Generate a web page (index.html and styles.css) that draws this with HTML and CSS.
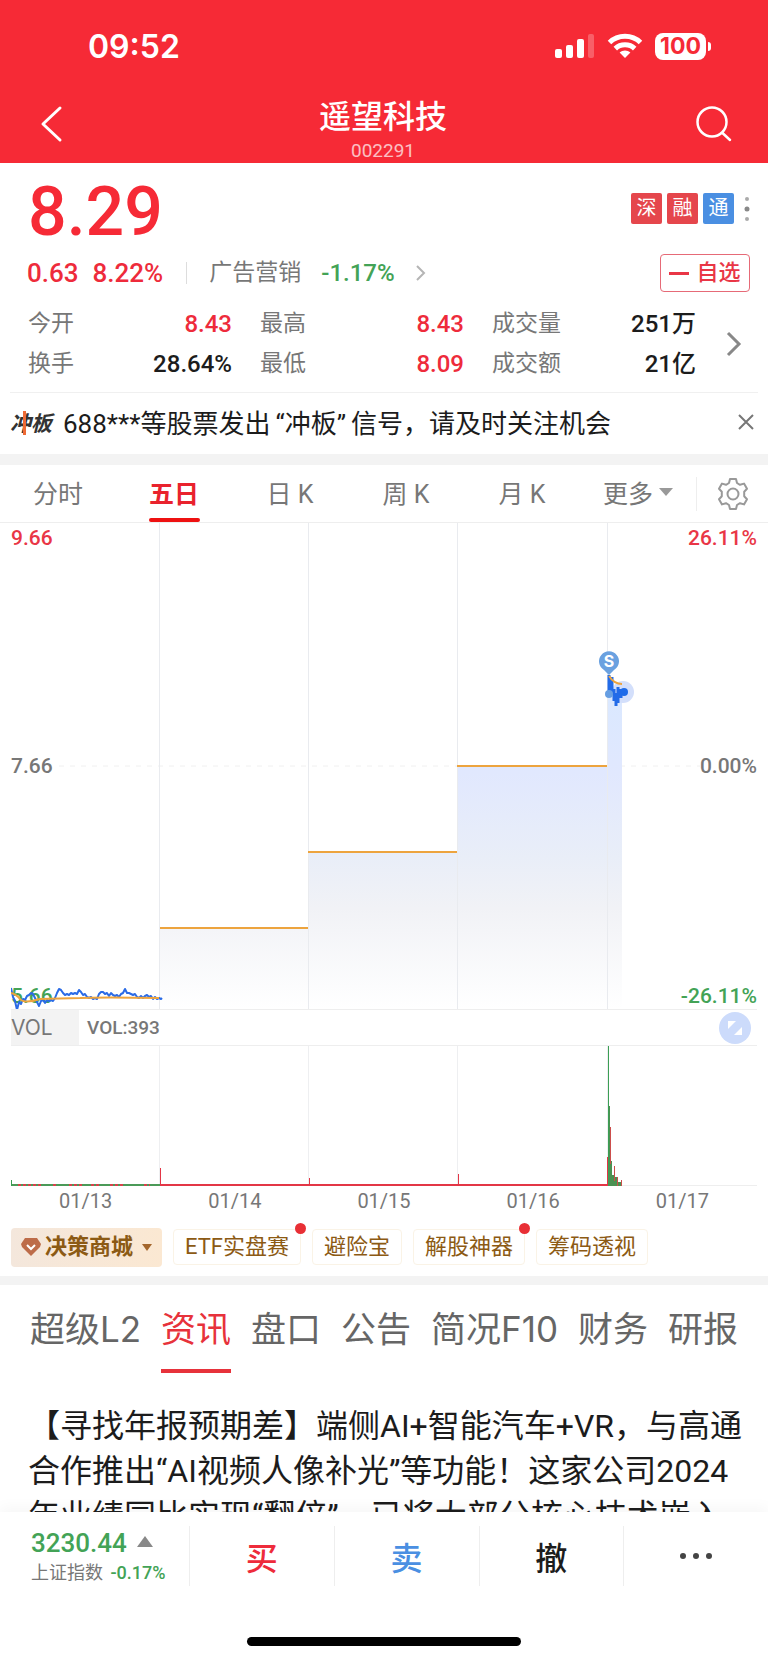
FILE: index.html
```html
<!DOCTYPE html>
<html lang="zh-CN">
<head>
    <meta charset="UTF-8">
    <meta name="viewport" content="width=device-width, initial-scale=1">
    <title>遥望科技 002291</title>
    <link rel="stylesheet" href="styles.css">
</head>
<body>

<header class="header">
    <div class="status">
        <span class="time">09:52</span>
        <div class="status-icons">
            <svg width="40" height="26" viewBox="0 0 40 26" fill="#fff">
                <rect x="0" y="16" width="7" height="9" rx="2"/>
                <rect x="11" y="12" width="7" height="13" rx="2"/>
                <rect x="22" y="6" width="7" height="19" rx="2"/>
                <rect x="33" y="1" width="6" height="24" rx="2" opacity=".25"/>
            </svg>
            <svg width="36" height="26" viewBox="0 0 36 26" fill="none" stroke="#fff" stroke-width="5">
                <path d="M2.500 9.500C11 1.200 25 1.200 33.500 9.500"/>
                <path d="M8.300 15.600C13.500 10.600 22.500 10.600 27.700 15.600"/>
                <path d="M18 25l-5.400-5.400c3-2.800 7.800-2.800 10.800 0z" fill="#fff" stroke="none"/>
            </svg>
            <div class="battery"><span>100</span></div>
        </div>
    </div>
    <div class="title-bar">
        <button class="icon-button" aria-label="返回">
            <svg width="36" height="40" viewBox="0 0 36 40" fill="none" stroke="#fff" stroke-width="3" stroke-linecap="round" stroke-linejoin="round"><path d="M25 4L8 20l17 16"/></svg>
        </button>
        <div class="title">
            <h1>遥望科技</h1>
            <p>002291</p>
        </div>
        <button class="icon-button" aria-label="搜索">
            <svg width="38" height="38" viewBox="0 0 38 38" fill="none" stroke="#fff" stroke-width="2.500" stroke-linecap="round"><circle cx="17" cy="17" r="14.500"/><path d="M27.500 28L35 35"/></svg>
        </button>
    </div>
</header>

<main class="content">
    <section class="quote">
        <div class="price-row">
            <strong class="price">8.29</strong>
            <div class="tags">
                <span class="tag">深</span>
                <span class="tag">融</span>
                <span class="tag tag-blue">通</span>
                <svg width="8" height="30" viewBox="0 0 8 30" fill="#aaa"><circle cx="4" cy="5" r="2"/><circle cx="4" cy="15" r="2.500" fill="#888"/><circle cx="4" cy="25" r="2"/></svg>
            </div>
        </div>
        <div class="change-row">
            <span class="change red">0.63</span>
            <span class="change red">8.22%</span>
            <a class="sector" href="#">
                <span>广告营销</span>
                <b class="green">-1.17%</b>
                <svg width="12" height="18" viewBox="0 0 12 18" fill="none" stroke="#b5b5b5" stroke-width="2"><path d="M2 2l7 7-7 7"/></svg>
            </a>
            <button class="watch"><i></i>自选</button>
        </div>
        <div class="stats-row">
            <dl class="stats">
                <div><dt>今开</dt><dd class="red">8.43</dd></div>
                <div><dt>最高</dt><dd class="red">8.43</dd></div>
                <div><dt>成交量</dt><dd>251万</dd></div>
                <div><dt>换手</dt><dd>28.64%</dd></div>
                <div><dt>最低</dt><dd class="red">8.09</dd></div>
                <div><dt>成交额</dt><dd>21亿</dd></div>
            </dl>
            <button class="more-stats" aria-label="更多行情">
                <svg width="16" height="26" viewBox="0 0 16 26" fill="none" stroke="#888" stroke-width="3"><path d="M2 2l11 11L2 24"/></svg>
            </button>
        </div>
    </section>

    <section class="notice">
        <b class="notice-logo">冲<i></i>板</b>
        <p>688***等股票发出<span class="quoted">“冲板”</span>信号，请及时关注机会</p>
        <button aria-label="关闭">
            <svg width="18" height="18" viewBox="0 0 18 18" stroke="#777" stroke-width="2"><path d="M2 2l14 14M16 2L2 16"/></svg>
        </button>
    </section>

    <nav class="periods">
        <button>分时</button>
        <button class="active">五日</button>
        <button>日 K</button>
        <button>周 K</button>
        <button>月 K</button>
        <button>更多<i class="caret"></i></button>
        <button class="settings" aria-label="设置">
            <svg width="34" height="34" viewBox="0 0 34 34" fill="none" stroke="#999" stroke-width="2" stroke-linejoin="round">
                <path d="M14 2h6l1 4 3 1.800 4-1.200 3 5.200-2.800 3v4.400l2.800 3-3 5.200-4-1.200-3 1.800-1 4h-6l-1-4-3-1.800-4 1.200-3-5.200 2.800-3v-4.400l-2.800-3 3-5.200 4 1.200 3-1.800z"/>
                <circle cx="17" cy="17" r="5.500"/>
            </svg>
        </button>
    </nav>

    <section class="chart">
        <div class="price-chart">
            <span class="label top-left red">9.66</span>
            <span class="label top-right red">26.11%</span>
            <span class="label mid-left">7.66</span>
            <span class="label mid-right">0.00%</span>
            <span class="label bottom-left green">5.66</span>
            <span class="label bottom-right green">-26.11%</span>
            <svg viewBox="0 0 746 486">
                <defs>
                    <linearGradient id="fade" gradientUnits="userSpaceOnUse" x1="0" y1="150" x2="0" y2="486">
                        <stop offset="0" stop-color="#d8e8ff"/>
                        <stop offset=".3" stop-color="#e1e8fe"/>
                        <stop offset=".55" stop-color="#e9eef8"/>
                        <stop offset=".7" stop-color="#f1f2f6"/>
                        <stop offset="1" stop-color="#ffffff"/>
                    </linearGradient>
                </defs>
                <path d="M48 243H690" stroke="#f0f0f0" stroke-width="1" stroke-dasharray="5 6"/>
                <!-- area under the price -->
                <path d="M148 405H297V329H446V243H596V150L605 172 611 165V486H148z" fill="url(#fade)"/>
                <path d="M148.500 0V486M297.500 0V486M446.500 0V486M596.500 0V486" stroke="#e9ebef"/>
                <!-- price -->
                <path d="M0 465l2 9 2 4 2 9 2-8 2 2 2-5 2 1 2-4 2-1 2-2 2 1 2 4 2 4 2 4 2-5 2-1 2 3 2-3 2 1 2-1 2 1 2-3 2-5 2-4 2 1 2 3 2 2 2-1 2 1 2-2 2 1 2-1 2 1 2-4 2 2 2 3 2-1 2 3 2 1 2-1 2 2 2-1 2 1 2-5 2-2 2 0 2 2 2-1 2 3 2-3 2 2 2 1 2-1 2 2 2-3 2-1 2-4 2 4 2 0 2 1 2 1 2-1 2 3 2 1 2-2 2 2 2-2 2-1 2 2 2-1 2 3 2-2 2 2 2-1 2 1 1-1" fill="none" stroke="#2b6be6" stroke-width="2" stroke-linejoin="round"/>
                <path d="M0 470q5 1 9 6t20 0l40-1q20-1 79 0M149 405H297M297 329H446M446 243H596" fill="none" stroke="#eda43e" stroke-width="2"/>
                <!-- today -->
                <circle cx="612" cy="169" r="11" fill="#d3dffb"/>
                <path d="M598 152v18M601 154v18M603 166v12M605 170v13M607 164v16M610 166v9" fill="none" stroke="#226be8" stroke-width="3"/>
                <path d="M598 153q5 8 13 8" fill="none" stroke="#eda43e" stroke-width="2"/>
                <circle cx="598" cy="171" r="4" fill="#669ee2"/>
                <circle cx="613" cy="169" r="4" fill="#1e6be9"/>
                <path d="M598 152l-5-5a10 10 0 1 1 10 0z" fill="#6aa1e0"/>
                <text x="598" y="144" text-anchor="middle" class="marker">S</text>
            </svg>
        </div>
        <div class="volume-bar">
            <button class="indicator">VOL</button>
            <span>VOL:393</span>
            <button class="expand" aria-label="全屏">
                <svg width="32" height="32" viewBox="0 0 32 32"><circle cx="16" cy="16" r="16" fill="#ccdbfb"/><path d="M9 9h8l-8 8zM23 23h-8l8-8z" fill="#fff"/></svg>
            </button>
        </div>
        <svg class="volume-chart" viewBox="0 0 746 140">
            <path d="M148.500 0V140M297.500 0V140M446.500 0V140M596.500 0V140" stroke="#eeeff1"/>
            <path d="M0 139.500H746" stroke="#eee"/>
            <path d="M0 139H149" stroke="#4b9a58" stroke-width="2"/>
            <path d="M7 139H30M42 139h5M58 139h14M80 139h10M99 139h14M133 139h6" stroke="#d8424c" stroke-width="2" stroke-dasharray="3 2"/>
            <path d="M149 139H596" stroke="#e33646" stroke-width="2"/>
            <path d="M149.500 122V140M298.500 132V140M447.500 128V140M596.500 111V140" stroke="#e33646"/>
            <path d="M.5 134V140" stroke="#3b9e54"/>
            <path d="M597.500 0V140" stroke="#3b9e54" stroke-width="1"/>
            <path d="M598 60h1v55h2v14h2v2h4v5h4v4h-13z" fill="#4b9152"/>
            <path d="M599.500 81V118M603.500 120V135M606.500 131V140M610.500 134V140" stroke="#cc4e4c"/>
        </svg>
        <div class="dates">
            <span>01/13</span>
            <span>01/14</span>
            <span>01/15</span>
            <span>01/16</span>
            <span>01/17</span>
        </div>
    </section>

    <section class="tools">
        <button class="tool shop">
            <svg width="20" height="18" viewBox="0 0 20 18"><path d="M4 0h12l4 6-1 3-9 9-9-9-1-3z" fill="#bd6c49"/><path d="M6 7l4 4 4-4" fill="none" stroke="#fff" stroke-width="2"/></svg>
            决策商城
            <i class="caret"></i>
        </button>
        <button class="tool has-dot">ETF实盘赛</button>
        <button class="tool">避险宝</button>
        <button class="tool has-dot">解股神器</button>
        <button class="tool">筹码透视</button>
    </section>

    <nav class="tabs">
        <a href="#">超级L2</a>
        <a href="#" class="active">资讯</a>
        <a href="#">盘口</a>
        <a href="#">公告</a>
        <a href="#">简况F10</a>
        <a href="#">财务</a>
        <a href="#">研报</a>
    </nav>

    <article class="news">
        <p>【寻找年报预期差】端侧AI+智能汽车+VR，与高通合作推出“AI视频人像补光”等功能！这家公司2024年业绩同比实现“翻倍”，已将大部分核心技术嵌入</p>
    </article>
</main>

<footer class="footer">
    <div class="actions">
        <a class="index" href="#">
            <span class="index-value green">3230.44 <i></i></span>
            <span class="index-name">上证指数 <b class="green">-0.17%</b></span>
        </a>
        <button class="red">买</button>
        <button class="blue">卖</button>
        <button>撤</button>
        <button aria-label="更多">
            <svg width="34" height="8" viewBox="0 0 34 8" fill="#444"><circle cx="4" cy="4" r="3"/><circle cx="17" cy="4" r="3"/><circle cx="30" cy="4" r="3"/></svg>
        </button>
    </div>
    <div class="home-indicator"></div>
</footer>

</body>
</html>
```
FILE: styles.css
```css
* {
    box-sizing: border-box;
}

body {
    margin: 0;
    height: 100vh;
    display: flex;
    flex-direction: column;
    background: #fff;
    color: #1c1c1c;
    font-family: Roboto, "Noto Sans CJK SC", sans-serif;
    font-size: 24px;
}

h1, p, dl, dd {
    margin: 0;
}

button {
    padding: 0;
    border: none;
    background: transparent;
    color: inherit;
    font: inherit;
    cursor: pointer;
}

a {
    color: inherit;
    text-decoration: none;
}

svg {
    display: block;
}

.red {
    color: #ee2b3b;
}

.green {
    color: #43a356;
}

.blue {
    color: #4a8fe2;
}

.caret {
    border: 7px solid transparent;
    border-top: 8px solid #999;
    border-bottom: 0;
}

/* Header */
.header {
    flex: none;
    height: 163px;
    background: #f62a36;
    color: #fff;
}

.status {
    display: flex;
    justify-content: space-between;
    align-items: center;
    height: 92px;
    padding: 0 62px 0 88px;
}

.time {
    font: 600 32px Inter, sans-serif;
}

.status-icons {
    display: flex;
    align-items: center;
    gap: 12px;
}

.battery {
    position: relative;
    width: 51px;
    height: 27px;
    border-radius: 8px;
    background: #fff;
    color: #f62a36;
    font: 700 23px/27px Inter, sans-serif;
    text-align: center;
}

.battery::after {
    content: "";
    position: absolute;
    right: -5px;
    top: 9px;
    width: 3px;
    height: 9px;
    border-radius: 0 4px 4px 0;
    background: #fff;
}

.title-bar {
    display: flex;
    justify-content: space-between;
    align-items: center;
    height: 64px;
    padding: 0 35px;
}

.title {
    padding-top: 14px;
    text-align: center;
}

.title h1 {
    font-size: 32px;
    font-weight: 500;
    line-height: 40px;
}

.title p {
    font-size: 19px;
    line-height: 28px;
    opacity: .7;
}

/* Quote */
.price-row,
.change-row,
.stats-row,
.tags,
.sector {
    display: flex;
    align-items: center;
}

.price-row {
    justify-content: space-between;
    height: 91px;
    padding: 0 17px 0 28px;
}

.price {
    color: #f62a36;
    font-size: 68px;
    font-weight: 500;
    line-height: 91px;
    padding-top: 8px;
}

.tags {
    gap: 5px;
}

.tag {
    width: 31px;
    height: 31px;
    border-radius: 2px;
    background: #e5464c;
    color: #fff;
    font-size: 20px;
    line-height: 31px;
    text-align: center;
}

.tag-blue {
    background: #4a8fe2;
}

.tags svg {
    margin-left: 4px;
}

.change-row {
    height: 38px;
    padding: 0 18px 0 27px;
}

.change {
    margin-right: 14px;
    font-size: 26px;
    font-weight: 500;
}

.sector {
    gap: 20px;
    margin-left: 9px;
    color: #777;
    line-height: 22px;
    border-left: 1px solid #ddd;
    padding-left: 22px;
    font-size: 23px;
}

.sector b {
    font-size: 24px;
    font-weight: 500;
}

.watch {
    display: flex;
    align-items: center;
    justify-content: center;
    gap: 7px;
    width: 90px;
    height: 38px;
    margin-left: auto;
    border: 1px solid #e66a77;
    border-radius: 4px;
    color: #e93646;
    font-size: 22px;
    font-weight: 500;
    line-height: 32px;
}

.watch i {
    width: 20px;
    height: 3px;
    background: #e93646;
}

.stats-row {
    height: 100px;
    padding: 4px 26px 0 28px;
}

.stats {
    flex: 1;
    display: grid;
    grid-template-columns: repeat(3, 1fr);
    column-gap: 28px;
    line-height: 40px;
}

.stats div {
    display: flex;
    justify-content: space-between;
}

.stats dt {
    color: #777;
    font-size: 23px;
}

.stats dd {
    font-weight: 500;
}

.more-stats {
    margin-left: 30px;
}

/* Notice */
.notice {
    display: flex;
    align-items: center;
    height: 62px;
    margin: 0 10px;
    padding-bottom: 4px;
    border-top: 1px solid #f0f0f0;
    font-size: 26px;
}

.notice-logo {
    position: relative;
    width: 44px;
    margin-right: 9px;
    font-size: 21px;
    font-style: italic;
    color: #333;
}

.notice-logo i {
    position: absolute;
    left: 13px;
    top: 4px;
    width: 3px;
    height: 24px;
    background: #ee6a35;
}

.quoted {
    margin: 0 5px;
}

.notice button {
    margin-left: auto;
    margin-right: 3px;
}

/* Periods */
.periods {
    display: flex;
    height: 69px;
    border-top: 11px solid #f3f3f3;
    border-bottom: 1px solid #eee;
    color: #777;
}

.periods button {
    position: relative;
    flex: 1;
    display: flex;
    justify-content: center;
    align-items: center;
    gap: 6px;
    padding-bottom: 3px;
    font-size: 25px;
    white-space: pre;
}

.periods .active {
    color: #e9222d;
    font-weight: 700;
}

.periods .active::after {
    content: "";
    position: absolute;
    bottom: 0;
    width: 51px;
    height: 4px;
    border-radius: 2px;
    background: #ee1111;
}

.periods .settings {
    flex: none;
    width: 72px;
    height: 34px;
    margin: 12px 0;
    padding: 0;
    border-left: 1px solid #eee;
}

/* Chart */
.chart {
    margin: 0 11px;
}

.price-chart {
    position: relative;
    border-bottom: 1px solid #eee;
}

.label {
    position: absolute;
    color: #777;
    font-size: 21px;
    font-weight: 500;
    line-height: 24px;
}

.label.red {
    color: #e93646;
}

.label.green {
    color: #43a356;
}

.top-left, .mid-left, .bottom-left {
    left: 0;
}

.top-right, .mid-right, .bottom-right {
    right: 0;
}

.top-left, .top-right {
    top: 3px;
}

.mid-left, .mid-right {
    top: calc(50% - 12px);
}

.bottom-left, .bottom-right {
    bottom: 1px;
}

.price-chart svg {
    position: relative;
    width: 100%;
}

.marker {
    fill: #fff;
    font: 700 16px Inter, sans-serif;
}

.volume-bar {
    display: flex;
    align-items: center;
    height: 36px;
    border-bottom: 1px solid #eee;
    color: #777;
    font-size: 19px;
    font-weight: 500;
}

.indicator {
    width: 68px;
    height: 35px;
    margin-right: 8px;
    background: #f3f3f3;
    font: 21px Inter, sans-serif;
    text-align: left;
}

.expand {
    margin-left: auto;
    margin-right: 6px;
}

.volume-chart {
    width: 100%;
}

.dates {
    display: grid;
    grid-template-columns: repeat(5, 1fr);
    color: #777;
    font-size: 20px;
    line-height: 30px;
    text-align: center;
}

/* Tools */
.tools {
    display: flex;
    align-items: center;
    gap: 11px;
    height: 69px;
    padding: 2px 11px 0;
    border-bottom: 9px solid #f3f3f3;
}

.tool {
    position: relative;
    height: 36px;
    padding: 0 11px;
    border: 1px solid #faf3e6;
    border-radius: 4px;
    color: #8c5a14;
    font-size: 22px;
    line-height: 34px;
    white-space: nowrap;
}

.shop {
    display: flex;
    align-items: center;
    gap: 4px;
    height: 39px;
    padding: 0 10px;
    border: none;
    background: linear-gradient(90deg, #f4e7dc, #fbe8d2);
    font-weight: 700;
}

.shop .caret {
    margin-left: 5px;
    border-width: 7px 5px 0;
    border-top-color: #a4662c;
}

.has-dot::after {
    content: "";
    position: absolute;
    top: -7px;
    right: -6px;
    width: 11px;
    height: 11px;
    border-radius: 50%;
    background: #e82f35;
}

/* Tabs */
.tabs {
    display: flex;
    justify-content: space-between;
    padding: 18px 30px 0;
    color: #666;
    font: 35px/52px Inter, "Noto Sans CJK SC", sans-serif;
    white-space: nowrap;
}

.tabs a {
    padding-bottom: 14px;
    border-bottom: 4px solid transparent;
}

.tabs .active {
    color: #e7323b;
    border-bottom-color: #e7323b;
}

/* News */
.content {
    flex: 1;
    min-height: 0;
    overflow: hidden;
}

.news {
    padding: 31px 22px 0 28px;
    font-size: 32px;
    line-height: 45px;
}

/* Footer */
.footer {
    position: relative;
    flex: none;
    height: 150px;
    background: #fff;
    box-shadow: 0 -4px 14px rgba(0, 0, 0, .04);
}

.actions {
    display: flex;
    height: 88px;
    padding: 14px 0;
}

.actions button {
    flex: 1;
    display: flex;
    justify-content: center;
    align-items: center;
    border-left: 1px solid #eee;
    font-size: 32px;
    font-weight: 500;
}

.index {
    display: flex;
    flex-direction: column;
    width: 189px;
    padding-left: 31px;
}

.index-value {
    font-size: 26px;
    font-weight: 500;
    line-height: 34px;
}

.index-value i {
    display: inline-block;
    margin: 0 0 5px 4px;
    border: 8px solid transparent;
    border-top: 0;
    border-bottom: 11px solid #888;
}

.index-name {
    color: #777;
    font-size: 18px;
    line-height: 26px;
}

.index-name b {
    margin-left: 3px;
    font-weight: 500;
}

.home-indicator {
    width: 274px;
    height: 9px;
    margin: 37px auto 0;
    border-radius: 5px;
    background: #000;
}
```
